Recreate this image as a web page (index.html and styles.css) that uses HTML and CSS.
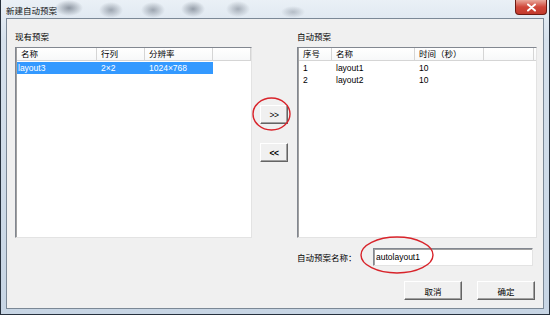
FILE: index.html
```html
<!DOCTYPE html>
<html lang="zh-CN">
<head>
    <meta charset="UTF-8">
    <title>新建自动预案</title>
    <link rel="stylesheet" href="styles.css">
</head>
<body>
    <div class="window">
        <div class="titlebar">
            <span class="title">新建自动预案</span>
            <span class="close-btn">
                <svg width="11" height="9" viewBox="0 0 11 9"><path d="M2 1.5 L9 7.5 M9 1.5 L2 7.5" stroke="#fff" stroke-width="2" stroke-linecap="round"/></svg>
            </span>
        </div>

        <div class="client">
            <div class="panes">
                <div class="pane">
                    <div class="pane-label">现有预案</div>
                    <div class="listbox">
                        <div class="list-head cols-left">
                            <span>名称</span>
                            <span>行列</span>
                            <span>分辨率</span>
                            <span></span>
                        </div>
                        <div class="list-body">
                            <div class="list-row cols-left selected">
                                <span>layout3</span>
                                <span>2×2</span>
                                <span>1024×768</span>
                            </div>
                        </div>
                    </div>
                </div>

                <div class="movers">
                    <button class="btn move-btn">&gt;&gt;</button>
                    <button class="btn move-btn bold">&lt;&lt;</button>
                </div>

                <div class="pane">
                    <div class="pane-label">自动预案</div>
                    <div class="listbox">
                        <div class="list-head cols-right">
                            <span>序号</span>
                            <span>名称</span>
                            <span>时间（秒）</span>
                            <span></span>
                        </div>
                        <div class="list-body">
                            <div class="list-row cols-right">
                                <span>1</span>
                                <span>layout1</span>
                                <span>10</span>
                            </div>
                            <div class="list-row cols-right">
                                <span>2</span>
                                <span>layout2</span>
                                <span>10</span>
                            </div>
                        </div>
                    </div>
                </div>
            </div>

            <div class="name-row">
                <label class="name-label" for="planName">自动预案名称：</label>
                <input type="text" id="planName" class="name-input" value="autolayout1">
            </div>

            <div class="actions">
                <button class="btn action-btn">取消</button>
                <button class="btn action-btn">确定</button>
            </div>
        </div>

        <!-- red annotation marks -->
        <svg class="marks" width="550" height="315">
            <ellipse cx="271.5" cy="114" rx="18.5" ry="16" />
            <ellipse cx="397" cy="255" rx="36" ry="18" />
        </svg>
    </div>
</body>
</html>
```

FILE: styles.css
```css
body {
    margin: 0;
    background: #fff;
    font-family: "Liberation Sans", "Noto Sans CJK SC", sans-serif;
    font-size: 8.5px;
    color: #000;
}

.window {
    position: relative;
    width: 548px;
    height: 314px;
    border: 1px solid #27313d;
    border-top: none;
    background:
        radial-gradient(ellipse 14px 8px at 68px 8px, rgba(70,80,95,0.55), transparent),
        radial-gradient(ellipse 12px 8px at 110px 10px, rgba(70,80,95,0.45), transparent),
        radial-gradient(ellipse 12px 8px at 152px 10px, rgba(70,80,95,0.45), transparent),
        radial-gradient(ellipse 12px 8px at 192px 9px, rgba(70,80,95,0.5), transparent),
        radial-gradient(ellipse 12px 8px at 237px 9px, rgba(70,80,95,0.4), transparent),
        radial-gradient(ellipse 12px 6px at 292px 12px, rgba(70,80,95,0.3), transparent),
        linear-gradient(#eaf0f6, #d6e1ec 40px, #c7d5e4);
}

.titlebar {
    display: flex;
    align-items: flex-start;
    height: 18px;
}

.title {
    padding: 4px 0 0 5px;
    font-size: 8.5px;
    color: #111;
}

.close-btn {
    margin-left: auto;
    margin-right: 2px;
    width: 32px;
    height: 15px;
    display: flex;
    align-items: center;
    justify-content: center;
    border: 1px solid #6d1a12;
    border-top: none;
    border-radius: 0 0 4px 4px;
    background: linear-gradient(#e9a99c, #d0473a 50%, #c23a2c);
    box-sizing: border-box;
}

.client {
    margin: 0 5px;
    height: 291px;
    box-sizing: border-box;
    border: 1px solid #7b8896;
    background: #f0f0f0;
    padding: 12px 6px 0 8px;
}

.panes {
    display: grid;
    grid-template-columns: 237px 45px 240px;
}

.pane-label {
    line-height: 12px;
    margin-bottom: 4px;
}

.listbox {
    height: 191px;
    box-sizing: border-box;
    background: #fff;
    border: 1px solid;
    border-color: #828790 #e3e3e3 #e3e3e3 #828790;
    box-shadow: inset 1px 1px 0 #a0a0a0;
    padding-left: 1px;
}

.cols-left {
    display: grid;
    grid-template-columns: 80px 48px 68px 38px;
}

.cols-right {
    display: grid;
    grid-template-columns: 33px 83px 69px 50px;
}

.list-head {
    height: 12px;
    line-height: 12px;
    background: linear-gradient(#fff, #f7f8f9);
    border-bottom: 1px solid #d5d5d5;
}

.list-head span {
    padding-left: 4px;
    border-right: 1px solid #d5d5d5;
}

.list-body {
    padding-top: 1px;
}

.list-row {
    height: 12px;
    line-height: 12px;
}

.list-row span {
    padding-left: 4px;
}

.cols-left.list-row {
    grid-template-columns: 80px 48px 68px;
    width: 196px;
}

.cols-left.list-row span:first-child {
    padding-left: 1px;
}

.list-row.selected {
    background: #3399ff;
    color: #fff;
}

.movers {
    display: flex;
    flex-direction: column;
    align-items: flex-start;
    padding: 74px 0 0 8px;
    gap: 19px;
}

.btn {
    font-family: "Liberation Sans", "Noto Sans CJK SC", sans-serif;
    font-size: 8.5px;
    color: #000;
    background: #f0f0f0;
    border: 1px solid;
    border-color: #fff #646464 #646464 #fff;
    box-shadow: inset -1px -1px 0 #a0a0a0;
    padding: 0;
    height: 19px;
}

.move-btn {
    width: 28px;
    letter-spacing: -0.5px;
}

.move-btn.bold {
    font-weight: bold;
}

.name-row {
    display: flex;
    align-items: center;
    margin: 10px 0 0 282px;
    height: 18px;
}

.name-label {
    width: 76px;
}

.name-input {
    width: 160px;
    height: 18px;
    box-sizing: border-box;
    margin: 0;
    padding: 0 2px;
    font-family: "Liberation Sans", "Noto Sans CJK SC", sans-serif;
    font-size: 8.5px;
    background: #fff;
    border: 1px solid;
    border-color: #828790 #e3e3e3 #e3e3e3 #828790;
    box-shadow: inset 1px 1px 0 #a0a0a0;
    outline: none;
}

.actions {
    display: flex;
    justify-content: flex-end;
    gap: 15px;
    margin: 15px 2px 0 0;
}

.action-btn {
    width: 58px;
}

.marks {
    position: absolute;
    left: -1px;
    top: 0;
    pointer-events: none;
}

.marks ellipse {
    fill: none;
    stroke: #d8232a;
    stroke-width: 1.4;
}
```
